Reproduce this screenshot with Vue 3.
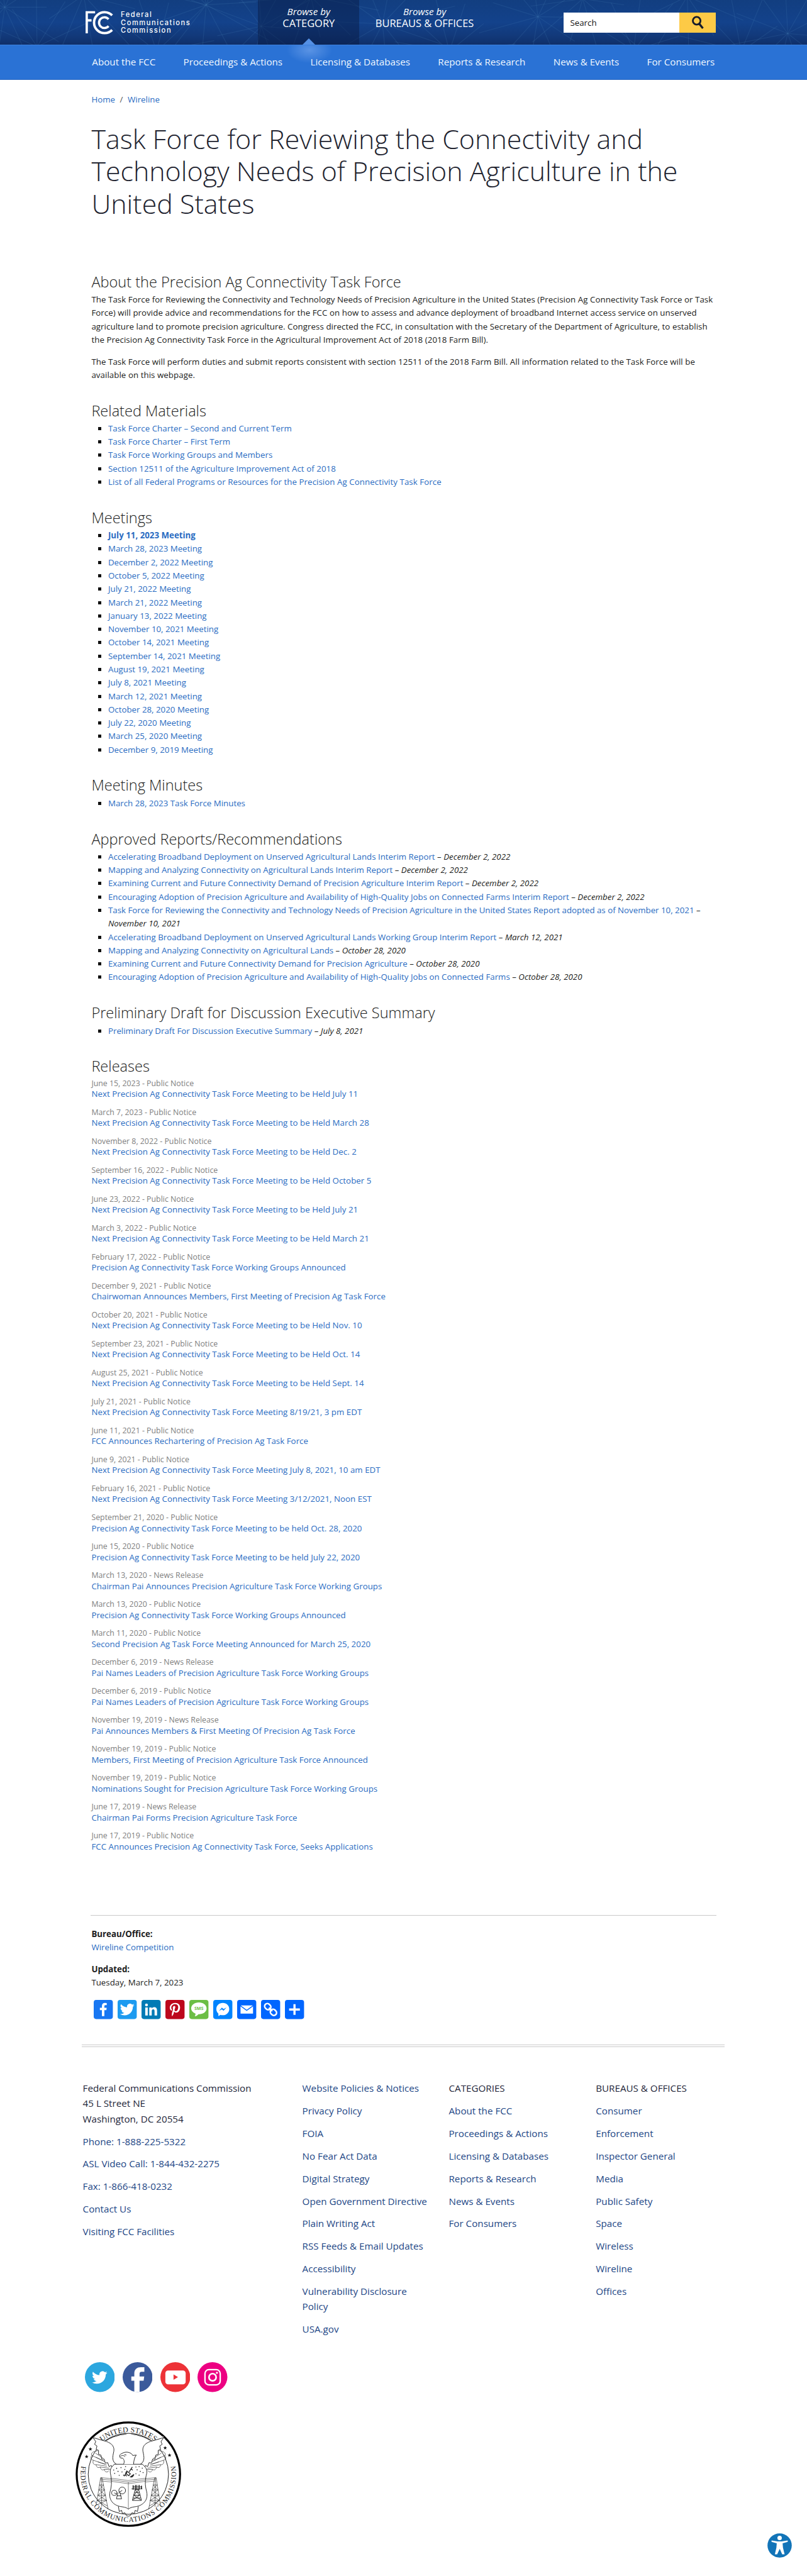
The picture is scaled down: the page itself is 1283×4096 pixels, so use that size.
<script setup>
const navItems = ['About the FCC', 'Proceedings & Actions', 'Licensing & Databases', 'Reports & Research', 'News & Events', 'For Consumers']

const related = [
  'Task Force Charter – Second and Current Term',
  'Task Force Charter – First Term',
  'Task Force Working Groups and Members',
  'Section 12511 of the Agriculture Improvement Act of 2018',
  'List of all Federal Programs or Resources for the Precision Ag Connectivity Task Force'
]

const meetings = [
  'July 11, 2023', 'March 28, 2023', 'December 2, 2022', 'October 5, 2022', 'July 21, 2022', 'March 21, 2022',
  'January 13, 2022', 'November 10, 2021', 'October 14, 2021', 'September 14, 2021', 'August 19, 2021',
  'July 8, 2021', 'March 12, 2021', 'October 28, 2020', 'July 22, 2020', 'March 25, 2020', 'December 9, 2019'
]

const reports = [
  ['Accelerating Broadband Deployment on Unserved Agricultural Lands Interim Report', 'December 2, 2022'],
  ['Mapping and Analyzing Connectivity on Agricultural Lands Interim Report', 'December 2, 2022'],
  ['Examining Current and Future Connectivity Demand of Precision Agriculture Interim Report', 'December 2, 2022'],
  ['Encouraging Adoption of Precision Agriculture and Availability of High-Quality Jobs on Connected Farms Interim Report', 'December 2, 2022'],
  ['Task Force for Reviewing the Connectivity and Technology Needs of Precision Agriculture in the United States Report adopted as of November 10, 2021', 'November 10, 2021'],
  ['Accelerating Broadband Deployment on Unserved Agricultural Lands Working Group Interim Report', 'March 12, 2021'],
  ['Mapping and Analyzing Connectivity on Agricultural Lands', 'October 28, 2020'],
  ['Examining Current and Future Connectivity Demand for Precision Agriculture', 'October 28, 2020'],
  ['Encouraging Adoption of Precision Agriculture and Availability of High-Quality Jobs on Connected Farms', 'October 28, 2020']
]

const PN = 'Public Notice'
const NR = 'News Release'
const releases = [
  ['June 15, 2023', PN, 'Next Precision Ag Connectivity Task Force Meeting to be Held July 11'],
  ['March 7, 2023', PN, 'Next Precision Ag Connectivity Task Force Meeting to be Held March 28'],
  ['November 8, 2022', PN, 'Next Precision Ag Connectivity Task Force Meeting to be Held Dec. 2'],
  ['September 16, 2022', PN, 'Next Precision Ag Connectivity Task Force Meeting to be Held October 5'],
  ['June 23, 2022', PN, 'Next Precision Ag Connectivity Task Force Meeting to be Held July 21'],
  ['March 3, 2022', PN, 'Next Precision Ag Connectivity Task Force Meeting to be Held March 21'],
  ['February 17, 2022', PN, 'Precision Ag Connectivity Task Force Working Groups Announced'],
  ['December 9, 2021', PN, 'Chairwoman Announces Members, First Meeting of Precision Ag Task Force'],
  ['October 20, 2021', PN, 'Next Precision Ag Connectivity Task Force Meeting to be Held Nov. 10'],
  ['September 23, 2021', PN, 'Next Precision Ag Connectivity Task Force Meeting to be Held Oct. 14'],
  ['August 25, 2021', PN, 'Next Precision Ag Connectivity Task Force Meeting to be Held Sept. 14'],
  ['July 21, 2021', PN, 'Next Precision Ag Connectivity Task Force Meeting 8/19/21, 3 pm EDT'],
  ['June 11, 2021', PN, 'FCC Announces Rechartering of Precision Ag Task Force'],
  ['June 9, 2021', PN, 'Next Precision Ag Connectivity Task Force Meeting July 8, 2021, 10 am EDT'],
  ['February 16, 2021', PN, 'Next Precision Ag Connectivity Task Force Meeting 3/12/2021, Noon EST'],
  ['September 21, 2020', PN, 'Precision Ag Connectivity Task Force Meeting to be held Oct. 28, 2020'],
  ['June 15, 2020', PN, 'Precision Ag Connectivity Task Force Meeting to be held July 22, 2020'],
  ['March 13, 2020', NR, 'Chairman Pai Announces Precision Agriculture Task Force Working Groups'],
  ['March 13, 2020', PN, 'Precision Ag Connectivity Task Force Working Groups Announced'],
  ['March 11, 2020', PN, 'Second Precision Ag Task Force Meeting Announced for March 25, 2020'],
  ['December 6, 2019', NR, 'Pai Names Leaders of Precision Agriculture Task Force Working Groups'],
  ['December 6, 2019', PN, 'Pai Names Leaders of Precision Agriculture Task Force Working Groups'],
  ['November 19, 2019', NR, 'Pai Announces Members & First Meeting Of Precision Ag Task Force'],
  ['November 19, 2019', PN, 'Members, First Meeting of Precision Agriculture Task Force Announced'],
  ['November 19, 2019', PN, 'Nominations Sought for Precision Agriculture Task Force Working Groups'],
  ['June 17, 2019', NR, 'Chairman Pai Forms Precision Agriculture Task Force'],
  ['June 17, 2019', PN, 'FCC Announces Precision Ag Connectivity Task Force, Seeks Applications']
]

const contact = ['Phone: 1-888-225-5322', 'ASL Video Call: 1-844-432-2275', 'Fax: 1-866-418-0232', 'Contact Us', 'Visiting FCC Facilities']
const policies = ['Website Policies & Notices', 'Privacy Policy', 'FOIA', 'No Fear Act Data', 'Digital Strategy', 'Open Government Directive', 'Plain Writing Act', 'RSS Feeds & Email Updates', 'Accessibility', 'Vulnerability Disclosure Policy', 'USA.gov']
const bureaus = ['Consumer', 'Enforcement', 'Inspector General', 'Media', 'Public Safety', 'Space', 'Wireless', 'Wireline', 'Offices']

// Network pattern in the masthead: spokes that leave a few hubs.
const hubs = [[8, 12], [62, 78], [140, -8], [262, 86], [345, 8], [437, 44], [520, -6], [640, 40], [752, 86], [900, 28], [975, -2], [1060, 84], [1150, -6], [1240, 86], [1318, 56]]
const spokes = hubs.flatMap(([x, y], i) =>
  Array.from({ length: 11 }, (_, k) => {
    const a = (k / 11) * Math.PI * 2 + i * 0.7
    const r = 70 + ((k * 37 + i * 23) % 60)
    return { x1: x, y1: y, x2: x + r * Math.cos(a), y2: y + r * Math.sin(a) }
  })
)

const stars = [[255, 607], [277, 603], [296, 612], [262, 622], [282, 625], [352, 600], [368, 598], [384, 606], [358, 614], [374, 622], [388, 628], [245, 632], [268, 642], [290, 641], [352, 634], [368, 641], [240, 615], [300, 598]]
const bird = 'M28 8.6a9.9 9.9 0 0 1-2.8.8 4.9 4.9 0 0 0 2.2-2.7c-1 .5-2 1-3.1 1.2a4.9 4.9 0 0 0-8.4 4.5A14 14 0 0 1 5.7 7.2a4.9 4.9 0 0 0 1.5 6.6 5 5 0 0 1-2.2-.6v.1a4.9 4.9 0 0 0 3.9 4.8 5 5 0 0 1-2.2.1 4.9 4.9 0 0 0 4.6 3.4A9.9 9.9 0 0 1 4 23.6a13.9 13.9 0 0 0 7.5 2.2c9.1 0 14-7.5 14-14v-.6A10 10 0 0 0 28 8.6z'
</script>

<template>
  <div class="page">
    <header class="masthead">
      <svg class="pattern" width="100%" height="75" aria-hidden="true">
        <line v-for="(s, i) in spokes" :key="i" v-bind="s" stroke="#5f97c9" stroke-opacity=".15" stroke-width="1.2" />
      </svg>
      <div class="brand">
        <svg width="46" height="40" viewBox="0 0 46 40" fill="none" stroke="#fff">
          <path d="M2 38V2.6h14M2 16.2h8" stroke-width="3.8" />
          <path d="M44.5 7.8A17.6 17.6 0 1 0 44.5 32.2" stroke-width="4" />
          <path d="M38.5 14.2A9 9 0 1 0 38.5 25.8" stroke-width="3.8" />
        </svg>
        <div class="brand-name"><span>Federal</span><span>Communications</span><span>Commission</span></div>
      </div>
      <div class="browse active"><em>Browse by</em><span>CATEGORY</span></div>
      <div class="browse second"><em>Browse by</em><span>BUREAUS &amp; OFFICES</span></div>
      <div class="search">
        <div class="field">Search</div>
        <button aria-label="Search">
          <svg width="20" height="26" viewBox="0 0 20 26" fill="none" stroke="#151b2b"><circle cx="8" cy="9.5" r="6.4" stroke-width="3" /><path d="M12.4 14.6L18.4 22" stroke-width="3.4" /></svg>
        </button>
      </div>
    </header>

    <nav class="mainnav">
      <a v-for="n in navItems" :key="n">{{ n }}</a>
    </nav>

    <main>
      <div class="crumbs"><a>Home</a><i>/</i><a>Wireline</a></div>
      <h1>Task Force for Reviewing the Connectivity and Technology Needs of Precision Agriculture in the United States</h1>

      <section class="open">
        <h2>About the Precision Ag Connectivity Task Force</h2>
        <p>The Task Force for Reviewing the Connectivity and Technology Needs of Precision Agriculture in the United States (Precision Ag Connectivity Task Force or Task Force) will provide advice and recommendations for the FCC on how to assess and advance deployment of broadband Internet access service on unserved agriculture land to promote precision agriculture. Congress directed the FCC, in consultation with the Secretary of the Department of Agriculture, to establish the Precision Ag Connectivity Task Force in the Agricultural Improvement Act of 2018 (2018 Farm Bill).</p>
        <p>The Task Force will perform duties and submit reports consistent with section 12511 of the 2018 Farm Bill. All information related to the Task Force will be available on this webpage.</p>
      </section>
      <section class="open">
        <h2>Related Materials</h2>
        <ul><li v-for="r in related" :key="r"><a>{{ r }}</a></li></ul>
      </section>
      <section>
        <h2>Meetings</h2>
        <ul><li v-for="(m, i) in meetings" :key="m"><a :class="{ strong: i === 0 }">{{ m }} Meeting</a></li></ul>
      </section>
      <section>
        <h2>Meeting Minutes</h2>
        <ul><li><a>March 28, 2023 Task Force Minutes</a></li></ul>
      </section>
      <section>
        <h2>Approved Reports/Recommendations</h2>
        <ul><li v-for="r in reports" :key="r[0]"><a>{{ r[0] }}</a> – <em>{{ r[1] }}</em></li></ul>
      </section>
      <section>
        <h2>Preliminary Draft for Discussion Executive Summary</h2>
        <ul><li><a>Preliminary Draft For Discussion Executive Summary</a> – <em>July 8, 2021</em></li></ul>
      </section>
      <section>
        <h2>Releases</h2>
        <div class="releases">
          <div v-for="(r, i) in releases" :key="i" class="release">
            <div class="date">{{ r[0] }} - {{ r[1] }}</div>
            <a>{{ r[2] }}</a>
          </div>
        </div>
      </section>

      <div class="meta">
        <div class="pair"><b>Bureau/Office:</b><a>Wireline Competition</a></div>
        <div class="pair"><b>Updated:</b><span>Tuesday, March 7, 2023</span></div>
        <div class="share">
          <svg viewBox="0 0 32 32"><rect width="32" height="32" rx="4" fill="#1877f2" /><path fill="#fff" d="M17.8 27V17h3.4l.5-3.9h-3.9v-2.5c0-1.1.3-1.9 1.9-1.9h2.1V5.2A28 28 0 0 0 18.700 5c-3 0-5 1.800-5 5.200v2.900h-3.400V17h3.400v10z" /></svg>
          <svg viewBox="0 0 32 32"><rect width="32" height="32" rx="4" fill="#1d9bf0" /><path fill="#fff" :d="bird" /></svg>
          <svg viewBox="0 0 32 32"><rect width="32" height="32" rx="4" fill="#007bb5" /><path fill="#fff" d="M6.200 12.600h4.200v13.500H6.200zM8.300 6a2.400 2.400 0 1 1 0 4.800 2.400 2.400 0 0 1 0-4.800M13 12.600h4v1.800c.6-1 2-2.200 4-2.200 4.200 0 5 2.800 5 6.500v7.400h-4.200v-6.600c0-1.600 0-3.600-2.200-3.600s-2.500 1.700-2.500 3.500v6.700H13z" /></svg>
          <svg viewBox="0 0 32 32"><rect width="32" height="32" rx="4" fill="#bd081c" /><path fill="#fff" d="M16.500 5c-6.100 0-9.200 4.400-9.200 8 0 2.200.8 4.200 2.600 4.900.3.100.6 0 .7-.3l.3-1c.1-.4 0-.5-.2-.8-.5-.6-.9-1.400-.9-2.500 0-3.200 2.400-6.100 6.300-6.100 3.400 0 5.300 2.100 5.300 4.900 0 3.700-1.600 6.800-4 6.800-1.400 0-2.400-1.100-2.100-2.500.4-1.600 1.200-3.400 1.200-4.600 0-1-.6-1.900-1.700-1.900-1.400 0-2.500 1.400-2.500 3.300 0 1.200.4 2 .4 2l-1.700 7c-.5 2.100-.1 4.600 0 4.900 0 .1.200.2.300.1.100-.2 1.700-2.200 2.300-4.100l.9-3.500c.4.800 1.700 1.600 3.100 1.600 4.100 0 6.900-3.700 6.900-8.700C24.500 8.300 21.300 5 16.500 5z" /></svg>
          <svg viewBox="0 0 32 32"><rect width="32" height="32" rx="4" fill="#6cbe45" /><path fill="#fff" d="M16 4.200c7.100 0 12.900 4.300 12.900 10S23.100 23.900 16 23.900c-.3 0-.6 0-.9 0-1.300 1.900-3.500 3.200-6.100 3.400 1-1.400 1.400-2.800 1.300-4.500C6 21.200 3.100 18 3.100 14.200c0-5.700 5.800-10 12.900-10z" /><text x="16" y="17.100" text-anchor="middle" class="sms">SMS</text></svg>
          <svg viewBox="0 0 32 32"><rect width="32" height="32" rx="4" fill="#0084ff" /><path fill="#fff" d="M16 5C9.900 5 5.200 9.400 5.200 15.200c0 3.100 1.300 5.800 3.400 7.600V27l3.500-2a12 12 0 0 0 3.900.600c6.100 0 10.800-4.500 10.800-10.400S22.100 5 16 5z" /><path fill="#0084ff" d="M9.500 18.300l5-5.400 2.900 2.400 4.900-2.600-5.100 5.400-2.700-2.400z" /></svg>
          <svg viewBox="0 0 32 32"><rect width="32" height="32" rx="4" fill="#0166ff" /><path fill="#fff" d="M6 9.200h20.200L16 16.600zM5.700 10.900L16 18.400l10.600-7.500v11.900H5.700z" /></svg>
          <svg viewBox="0 0 32 32"><rect width="32" height="32" rx="4" fill="#0166ff" /><g fill="none" stroke="#fff" stroke-width="2.700" transform="rotate(45 16 16)"><rect x="3.800" y="11.500" width="11" height="9" rx="4.500" /><rect x="17.200" y="11.500" width="11" height="9" rx="4.500" /><path d="M12 16h8" /></g></svg>
          <svg viewBox="0 0 32 32"><rect width="32" height="32" rx="4" fill="#0166ff" /><path fill="#fff" d="M14.200 7.200h3.600v7h7.200v3.600h-7.200V25h-3.600v-7.200H7v-3.600h7.200z" /></svg>
        </div>
      </div>
    </main>

    <footer>
      <div class="cols">
        <div><p class="addr">Federal Communications Commission<br>45 L Street NE<br>Washington, DC 20554</p><a v-for="c in contact" :key="c">{{ c }}</a></div>
        <div><a v-for="c in policies" :key="c">{{ c }}</a></div>
        <div><p>CATEGORIES</p><a v-for="c in navItems" :key="c">{{ c }}</a></div>
        <div><p>BUREAUS &amp; OFFICES</p><a v-for="c in bureaus" :key="c">{{ c }}</a></div>
      </div>
      <div class="social">
        <svg viewBox="0 0 50 50"><circle cx="25" cy="25" r="25" fill="#2ca7df" /><path fill="#fff" :d="bird" transform="translate(7.300 8.300) scale(1.080)" /></svg>
        <svg viewBox="0 0 50 50"><circle cx="25" cy="25" r="25" fill="#3b5a9b" /><path fill="#fff" d="M19.500 50V31h-5v-7h5v-5c0-7 4.500-10.500 11-10.500h5.800V16h-4.500c-2.800 0-3.500 1.500-3.500 3.500V24h7.800l-1 7h-6.800v19z" /></svg>
        <svg viewBox="0 0 50 50"><circle cx="25" cy="25" r="25" fill="#ed3237" /><rect x="8.300" y="14" width="34" height="23" rx="4.500" fill="#fff" /><path d="M22 20.600l7.500 4.400-7.500 4.400z" fill="#ed3237" /></svg>
        <svg viewBox="0 0 50 50"><circle cx="25" cy="25" r="25" fill="#ed0082" /><g fill="none" stroke="#fff" stroke-width="2.400"><rect x="12.500" y="12.500" width="25.500" height="25.500" rx="6.500" /><circle cx="25.200" cy="25.200" r="6" stroke-width="2.800" /></g><circle cx="32.500" cy="17.800" r="1.700" fill="#fff" /></svg>
      </div>
      <svg class="seal" viewBox="48 370 532 532">
        <defs>
          <path id="arc-top" d="M103 636A211 211 0 0 1 525 636" />
          <path id="arc-bottom" d="M79.300 586.200A240 240 0 1 0 548.700 586.200" />
        </defs>
        <circle cx="314" cy="636" r="260" fill="#fff" stroke="#000" stroke-width="10" />
        <circle cx="314" cy="636" r="202" fill="none" stroke="#111" stroke-width="3" />
        <path d="M136 450L206 470L316 430L424 468L492 446L470 500L160 500z" fill="#fff" />
        <path d="M196 468A204 204 0 0 1 432 468" fill="none" stroke="#111" stroke-width="3" />
        <text class="seal-text" font-size="38" text-anchor="middle"><textPath href="#arc-top" startOffset="50%" textLength="288">UNITED STATES</textPath></text>
        <text class="seal-text" font-size="36" text-anchor="middle"><textPath href="#arc-bottom" startOffset="50%" textLength="838">FEDERAL COMMUNICATIONS COMMISSION</textPath></text>
        <g fill="#111">
          <path v-for="(p, i) in [[123, 510], [104, 548], [499, 504], [521, 541]]" :key="i" :transform="`translate(${p[0]} ${p[1]})`" d="M0-10L2.500-3.300 9.500-3 4 1.300 6 8 0 4-6 8-4 1.300-9.500-3-2.500-3.300z" />
        </g>
        <g fill="none" stroke="#222" stroke-width="3" stroke-linejoin="round">
          <g v-for="s in [1, -1]" :key="s" :transform="s === 1 ? '' : 'translate(628 0) scale(-1 1)'">
            <path fill="#fff" d="M136 452L205 472C232 482 244 498 241 520C234 552 230 572 256 588L238 614L228 592L217 598L210 578L198 580L192 560L180 560L176 540L164 536L164 516L152 512L156 494L144 486L150 472z" />
            <path d="M160 518C132 522 124 532 130 542L190 570M130 542C122 552 126 564 138 566L196 586M138 566C132 580 140 590 152 588L206 596M152 588C152 602 164 606 172 600L218 606M172 600C176 614 184 618 192 612L226 612M192 612C196 626 208 630 216 618M148 530l40 26M150 550l44 22M160 574l44 14" stroke-width="2" />
            <path d="M174 655L153 790M174 655L182 655L212 812M178 655L180 800M168 690h22M165 715h30M160 742h40M157 768h48M168 690l27 25-35 27 45 26-48 22M190 690l-25 25 35 27-43 26 52 28" stroke-width="2" />
            <path d="M174 653L314 668M174 661L314 674M176 670L314 684" stroke-width="1.800" />
            <path d="M264 798l4 26 12-6 4 16 12-4 8 14 10 4" />
          </g>
          <path fill="#fff" d="M244 586H384C404 602 410 614 406 634C398 660 396 690 406 724C416 770 384 796 346 800C330 802 320 806 314 812C308 806 298 802 282 800C244 796 212 770 222 724C232 690 230 660 224 634C220 614 226 602 244 586z" />
          <path d="M224 656L314 668L404 656M226 664L314 676L402 664M228 672L314 684L400 672M314 676V812" stroke-width="1.800" />
          <path fill="#fff" d="M290 586C296 572 292 562 286 556L274 554C266 544 270 536 282 532C298 520 328 524 336 542L354 540C344 552 342 566 340 586" />
          <path d="M274 546c10-6 18-4 24 2M294 537l10 3" />
          <g stroke-width="4"><path d="M318 624L334 600M326 608l10 8M292 646L308 626M296 638l10 8M306 620l18 14-8 10-16-12z" /><path fill="#222" d="M322 650A14 14 0 0 0 342 636z" stroke-width="2" /></g>
          <g stroke-width="3"><circle cx="243" cy="730" r="13" /><circle cx="283" cy="718" r="17" /><path d="M262 728l-8 32h26l-10-36M256 745h22M243 730l12 6M283 718l-14 8" /></g>
          <g stroke-width="3"><path d="M357 690V714M336 700h46M330 710h54M348 714h18L380 768H334zM346 728h24M342 742h32M338 756h38M348 714l22 28-34 24M366 714l-24 28 38 26" /><path d="M338 692v22M350 690v24M368 690v24M380 694v18" stroke-width="5" /></g>
        </g>
        <circle v-for="(p, i) in stars" :key="'s' + i" :cx="p[0]" :cy="p[1]" r="2.600" fill="#222" />
      </svg>
    </footer>

    <div class="access">
      <svg width="41" height="41" viewBox="0 0 41 41"><circle cx="20.500" cy="20.500" r="20.300" fill="#1274b8" /><circle cx="20.500" cy="8" r="3.700" fill="#fff" /><path fill="#fff" d="M7 12.200l10 1.500h7L34 12.200v2.400l-8.500 2.200.6 7.500 2.700 11h-4L20.700 26l-4.300 9.300h-3.900l2.600-11 .6-7.500L7 14.600z" /></svg>
    </div>
  </div>
</template>

<style>
body { margin: 0; background: #fff; }
</style>

<style scoped>
.page { position: relative; zoom: 0.9502; height: 4310px; overflow: hidden; font: 14px/22.4px "Open Sans", "Noto Sans", sans-serif; color: #1b1c20; background: #fff; }
a { color: #2a6cc2; text-decoration: none; }

.masthead { position: relative; display: flex; height: 75px; padding-left: 143px; background: linear-gradient(#123e80, #13428b 50%, #12397a 80%, #0f2f69); color: #fff; }
.pattern { position: absolute; left: 0; top: 0; }
.brand { position: relative; display: flex; width: 289px; padding-top: 18px; }
.brand-name { display: flex; flex-direction: column; padding: 0 0 0 13px; font: 500 11.700px/13.300px Inter, sans-serif; letter-spacing: 1.650px; }
.browse { position: relative; display: flex; flex-direction: column; align-items: center; width: 169px; height: 66px; padding-top: 9px; text-align: center; }
.browse em { font-size: 16px; line-height: 20px; }
.browse span { font-size: 17.300px; line-height: 18px; white-space: nowrap; }
.active { background: rgba(8, 28, 68, .48); }
.active::after { content: ""; position: absolute; left: 74px; bottom: 0; border: 11px solid transparent; border-top: 0; border-bottom-color: #5590e4; }
.second { width: 219px; }
.search { position: relative; display: flex; height: 34px; margin: 21px 0 0 123px; }
.field { box-sizing: border-box; width: 194px; padding: 6px 11px; background: #fff; color: #111; }
.search button { display: flex; align-items: center; justify-content: center; width: 61px; border: 0; padding: 0; background: #fdca46; }

.mainnav { display: flex; gap: 46.700px; box-sizing: border-box; height: 59px; padding: 16px 0 0 154px; border-top: 1px solid #3d80dc; border-bottom: 2px solid #2966bf; background: radial-gradient(ellipse 38px 22px at 518px 8px, #5a93e4, #2a72d5); color: #fff; font-size: 16px; line-height: 25px; white-space: nowrap; }
.mainnav a { color: #f1f8ff; }

main { width: 1046px; padding: 21.400px 0 0 153px; }
.crumbs { display: flex; }
.crumbs i { padding: 0 8px; font-style: normal; color: #555; }
h1 { width: 1046px; margin: 27px 0 89.200px; font-weight: 300; font-size: 45.200px; line-height: 54.200px; color: #21232f; }
h2 { margin: 0 0 4px; font-weight: 300; font-size: 24.800px; line-height: 30px; color: #1b1c20; }
section { margin-bottom: 33.200px; }
.open p, .open ul { letter-spacing: .060px; }
.releases a { letter-spacing: .030px; }
p { margin: 0 0 14px; }
section p:last-child { margin-bottom: 0; }
ul { margin: 0; padding: 0 0 0 28px; list-style: square; }
li::marker { color: #111; }
.strong { font-weight: 700; }

.releases { padding-top: 1.100px; }
.release { height: 48.440px; line-height: 17.600px; }
.date { height: 17.500px; font-size: 13px; color: #808080; }

.meta { border-top: 1px solid #c9c9c9; margin: 92.500px 0 0 -1px; padding: 20px 0 0 1px; }
.pair { display: flex; flex-direction: column; margin-bottom: 14px; }
.share { display: flex; gap: 8px; padding: 4px 0 0 4px; }
.share svg { width: 32px; height: 32px; }
.sms { font: 700 7.500px "Open Sans", sans-serif; fill: #6cbe45; }

footer { width: 1075px; margin: 42px 0 0 137px; border-top: 5px double #c9c9c9; padding-top: 56px; font-size: 16px; line-height: 25.600px; color: #23263a; }
.cols { display: grid; grid-template-columns: 367.300px 245.100px 246px 1fr; padding-left: 1.500px; height: 430px; }
.cols > div { padding-right: 30px; }
.cols a { display: block; margin-bottom: 12.200px; color: #1d4685; }
.cols p { margin: 0 0 12.200px; }
.social { display: flex; gap: 13px; padding: 42px 0 0 5px; }
.social svg { width: 50px; height: 50px; }
.seal { display: block; width: 177px; height: 177px; margin: 48px 0 0 -11px; }
.seal-text { font-family: "Liberation Serif", serif; fill: #222; }
.access { position: absolute; left: 1284px; top: 4239.500px; width: 41px; height: 41px; }
</style>
